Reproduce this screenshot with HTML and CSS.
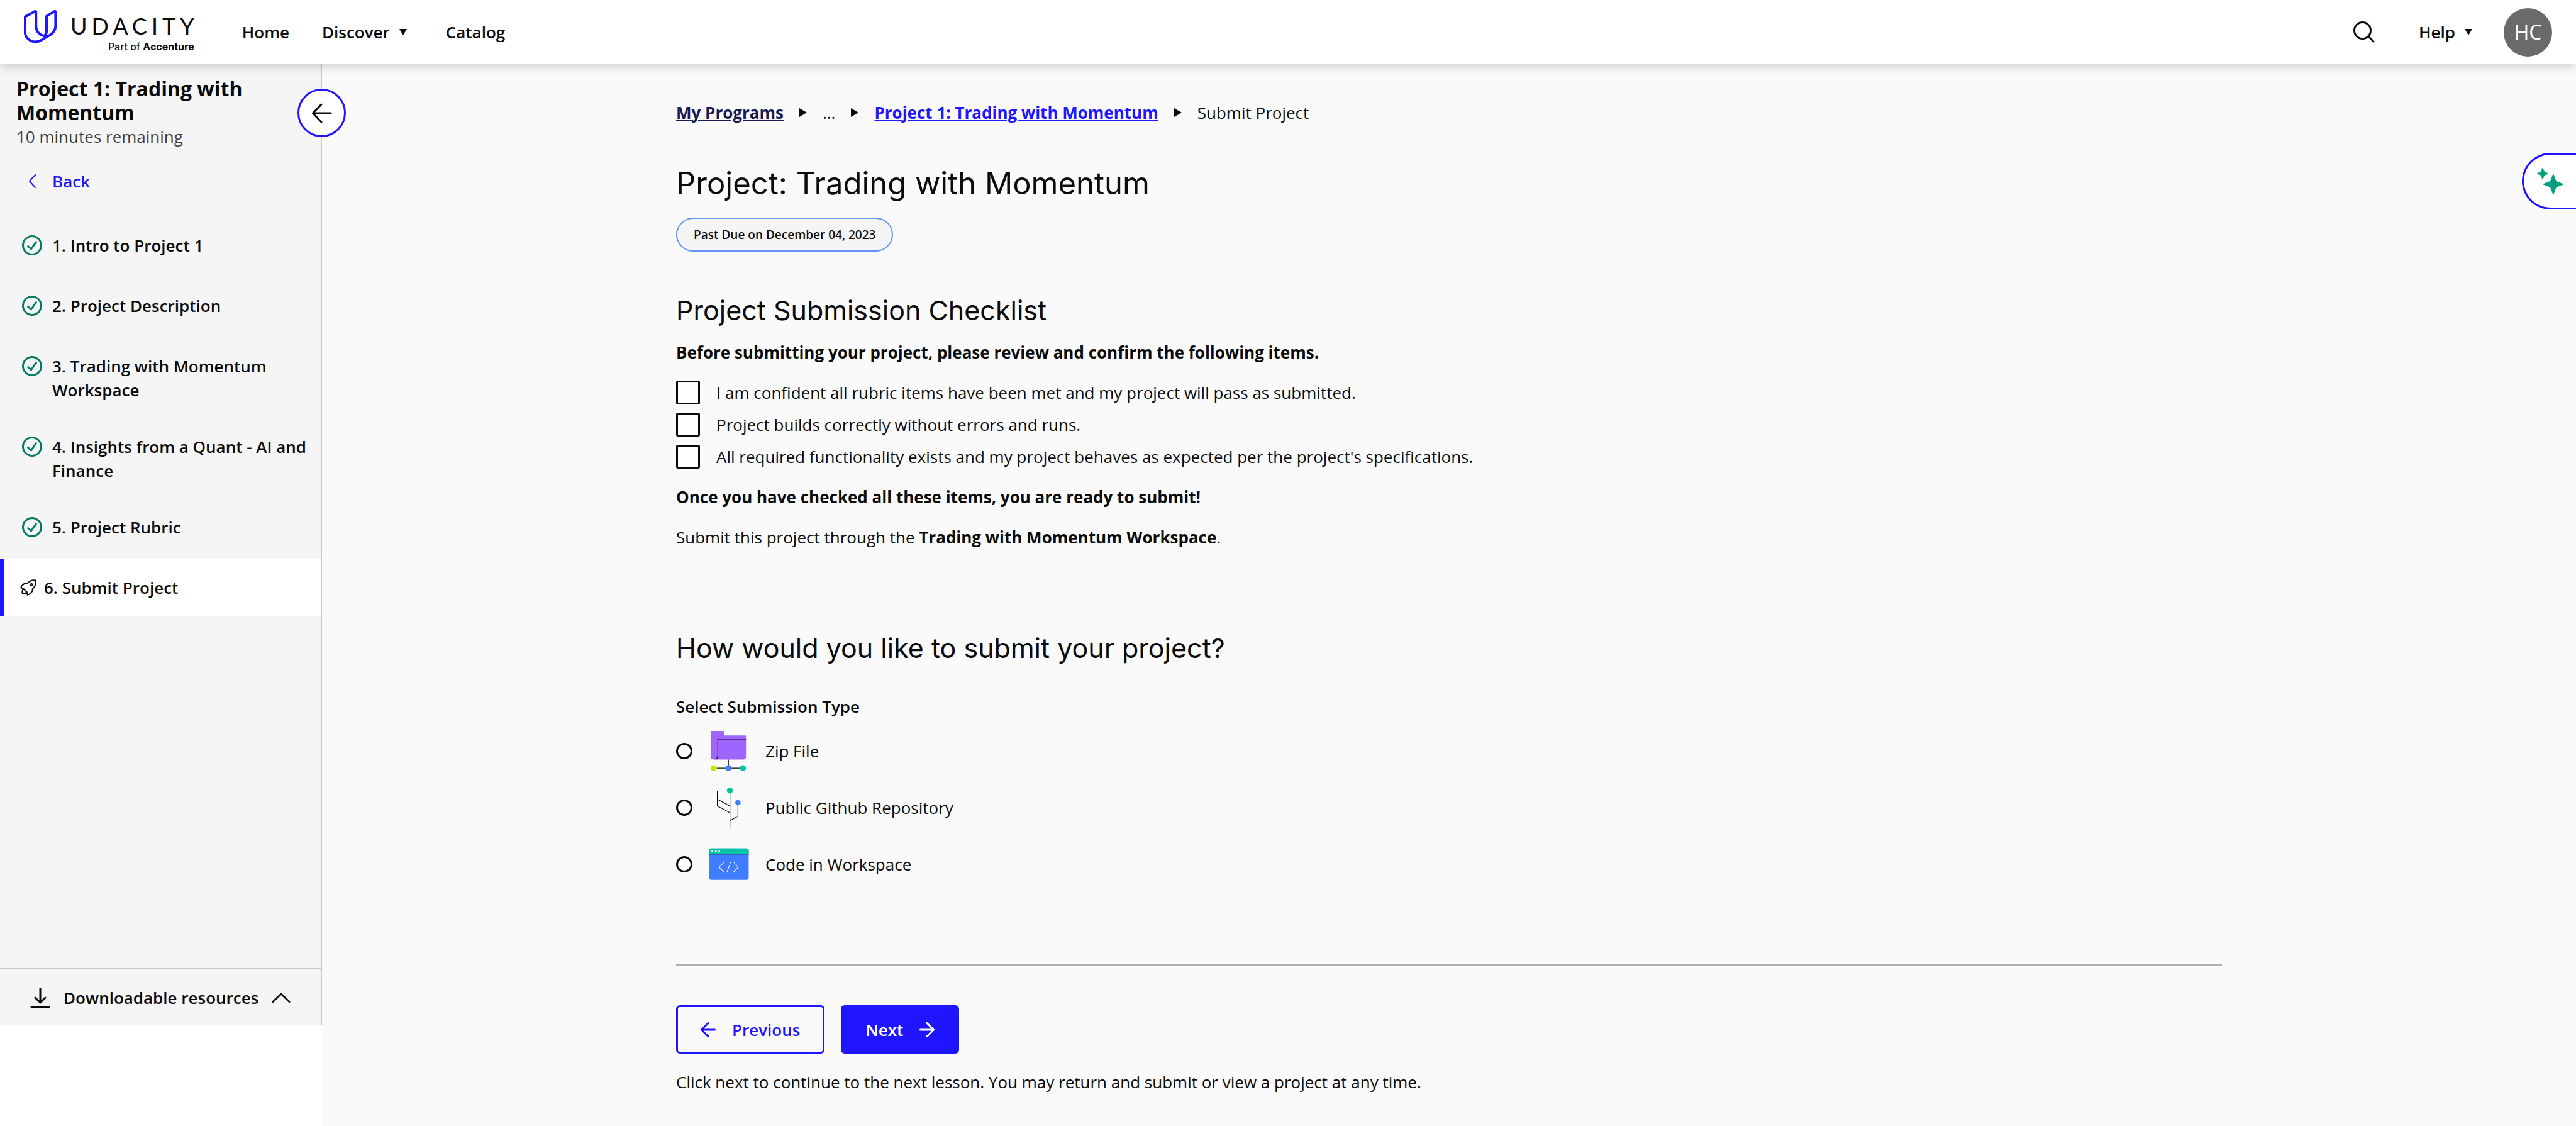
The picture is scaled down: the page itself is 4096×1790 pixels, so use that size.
FILE: index.html
```html
<!DOCTYPE html>
<html lang="en">
<head>
<meta charset="utf-8">
<meta name="viewport" content="width=device-width, initial-scale=1">
<title>Submit Project - Udacity</title>
<link rel="stylesheet" href="styles.css">
</head>
<body>
<header class="site-header">
  <a class="logo" href="#" aria-label="Udacity, part of Accenture">
    <svg class="logo-mark" viewBox="0 0 65 65" aria-hidden="true"><path d="M2 13.5 21 3q3-1.500 3 1v28c0 11 8 18 16.500 19.500M2 13.500v29C2 54 11 63 23 63c5 0 9-1.500 12-3.500L52 49.500C59 45 63 39 63 31V4q-.5-2.500-3-1L45 12v31c0 4-1 6-4.500 8.500"/></svg>
    <span class="logo-text">
      <span class="wordmark">UDACITY</span>
      <span class="tagline">Part of <b>Accenture</b></span>
    </span>
  </a>
  <nav class="main-nav" aria-label="Main">
    <a href="#">Home</a>
    <button type="button" class="nav-menu">Discover <svg class="caret" viewBox="0 0 12 10" aria-hidden="true"><path d="M0 0h12L6 10z"/></svg></button>
    <a href="#">Catalog</a>
  </nav>
  <div class="header-tools">
    <button type="button" class="search" aria-label="Search"><svg class="icon-search" viewBox="0 0 34 34" aria-hidden="true"><circle cx="14.500" cy="14.500" r="13"/><path d="m24 24 8 8"/></svg></button>
    <button type="button" class="nav-menu">Help <svg class="caret" viewBox="0 0 12 10" aria-hidden="true"><path d="M0 0h12L6 10z"/></svg></button>
    <button type="button" class="avatar">HC</button>
  </div>
</header>

<div class="page">
  <aside class="sidebar">
    <button type="button" class="collapse" aria-label="Collapse sidebar"><svg class="icon-collapse" viewBox="0 0 32 32" aria-hidden="true"><path d="M30 16H2M15 2 1.500 16 15 30"/></svg></button>
    <div class="lesson-head">
      <h2 class="lesson-title">Project 1: Trading with Momentum</h2>
      <p class="remaining">10 minutes remaining</p>
    </div>
    <a class="back" href="#"><svg class="icon-back" viewBox="0 0 12 22" aria-hidden="true"><path d="M11 1 2 11l9 10"/></svg>Back</a>
    <ol class="lessons">
      <li><a class="lesson" href="#"><svg class="icon-check" viewBox="0 0 32 32" aria-hidden="true"><circle cx="16" cy="16" r="14.500"/><path d="m9.500 17.500 5 4.500 8-11.500"/></svg><span>1. Intro to Project 1</span></a></li>
      <li><a class="lesson" href="#"><svg class="icon-check" viewBox="0 0 32 32" aria-hidden="true"><circle cx="16" cy="16" r="14.500"/><path d="m9.500 17.500 5 4.500 8-11.500"/></svg><span>2. Project Description</span></a></li>
      <li><a class="lesson" href="#"><svg class="icon-check" viewBox="0 0 32 32" aria-hidden="true"><circle cx="16" cy="16" r="14.500"/><path d="m9.500 17.500 5 4.500 8-11.500"/></svg><span>3. Trading with Momentum Workspace</span></a></li>
      <li><a class="lesson" href="#"><svg class="icon-check" viewBox="0 0 32 32" aria-hidden="true"><circle cx="16" cy="16" r="14.500"/><path d="m9.500 17.500 5 4.500 8-11.500"/></svg><span>4. Insights from a Quant - AI and Finance</span></a></li>
      <li><a class="lesson" href="#"><svg class="icon-check" viewBox="0 0 32 32" aria-hidden="true"><circle cx="16" cy="16" r="14.500"/><path d="m9.500 17.500 5 4.500 8-11.500"/></svg><span>5. Project Rubric</span></a></li>
      <li><a class="lesson current" href="#" aria-current="page"><svg class="icon-rocket" viewBox="0 0 26 26" aria-hidden="true"><path d="M24.500 1.500C19.500.8 15.500 2 11.500 6.200L8 6.500C5 7.500 2.500 10 1.200 13.200L6 15.500 10.500 20l1.200 4.800c3-.8 6-3.300 7.800-6.300l.3-3.500c4.700-4 5.700-8.500 4.700-13.500z"/><path d="M6 15.500c-2.500 1-3 3.500-2.500 6.500 3 .8 6 .2 7-2"/><circle cx="18" cy="8.500" r="1.500"/></svg><span>6. Submit Project</span></a></li>
    </ol>
    <button type="button" class="resources">
      <svg class="icon-download" viewBox="0 0 32 32" aria-hidden="true"><path d="M16 1v23M8 16l8 8 8-8M2 30.500h28"/></svg>
      Downloadable resources
      <svg class="icon-chevron" viewBox="0 0 30 16" aria-hidden="true"><path d="M2 14.500 15 2l13 12.500"/></svg>
    </button>
  </aside>

  <main class="main">
    <div class="content">
      <nav class="breadcrumbs" aria-label="Breadcrumb">
        <a class="crumb-root" href="#">My Programs</a>
        <svg class="crumb-arrow" viewBox="0 0 12 14" aria-hidden="true"><path d="M0 0v14l12-7z"/></svg>
        <span>...</span>
        <svg class="crumb-arrow" viewBox="0 0 12 14" aria-hidden="true"><path d="M0 0v14l12-7z"/></svg>
        <a class="crumb-link" href="#">Project 1: Trading with Momentum</a>
        <svg class="crumb-arrow" viewBox="0 0 12 14" aria-hidden="true"><path d="M0 0v14l12-7z"/></svg>
        <span>Submit Project</span>
      </nav>
      <h1 class="title">Project: Trading with Momentum</h1>
      <p class="due">Past Due on December 04, 2023</p>

      <section class="checklist">
        <h2 class="heading">Project Submission Checklist</h2>
        <p class="lead strong">Before submitting your project, please review and confirm the following items.</p>
        <div class="checks">
          <label class="check"><input type="checkbox"><span>I am confident all rubric items have been met and my project will pass as submitted.</span></label>
          <label class="check"><input type="checkbox"><span>Project builds correctly without errors and runs.</span></label>
          <label class="check"><input type="checkbox"><span>All required functionality exists and my project behaves as expected per the project's specifications.</span></label>
        </div>
        <p class="note strong">Once you have checked all these items, you are ready to submit!</p>
        <p class="note">Submit this project through the <b>Trading with Momentum Workspace</b>.</p>
      </section>

      <section class="submission">
        <h2 class="heading">How would you like to submit your project?</h2>
        <fieldset class="types">
          <legend>Select Submission Type</legend>
          <label class="type"><input type="radio" name="type">
            <svg class="type-icon" viewBox="0 0 80 80" aria-hidden="true"><path d="M4 1q0-1 1-1h25q1 0 1 1v8h42q1 0 1 1v42q0 5-6 5H10q-6 0-6-6z" fill="#a064ff"/><path d="M74 16H18v33c0 4-1 6-5 7M39 57v17M16 74h46" fill="none" stroke="#0b0b0b" stroke-width="1.500"/><circle cx="10" cy="74" r="6" fill="#bcea06"/><circle cx="39" cy="74" r="6" fill="#3f7cff"/><circle cx="68" cy="74" r="6" fill="#02c5a3"/></svg>
            <span>Zip File</span></label>
          <label class="type"><input type="radio" name="type">
            <svg class="type-icon" viewBox="0 0 80 80" aria-hidden="true"><path d="M42 12v68M17 7v29.500L42 50M17 23l25 14M58 34v23l-16 9" fill="none" stroke="#0b0b0b" stroke-width="1.500"/><circle cx="42" cy="6" r="6" fill="#02c5a3"/><circle cx="58" cy="30" r="5.300" fill="#3f7cff"/></svg>
            <span>Public Github Repository</span></label>
          <label class="type"><input type="radio" name="type">
            <svg class="type-icon" viewBox="0 0 80 80" aria-hidden="true"><rect x=".7" y="8.500" width="78.600" height="62.500" rx="4.500" fill="#3f7cff"/><path d="M.7 19v-6q0-4.500 4.500-4.500h69.600q4.500 0 4.500 4.500v6z" fill="#02c5a3"/><path d="M0 19.500h80" stroke="#0b0b0b" stroke-width="1.500"/><g fill="#fff"><circle cx="7" cy="14" r="1.700"/><circle cx="14" cy="14" r="1.700"/><circle cx="21" cy="14" r="1.700"/></g><path d="M31.500 35 20 45.500 31.500 56M48.500 35 59 45.500 48.500 56M43.500 35.500 36 56" fill="none" stroke="#fff" stroke-width="1.300"/></svg>
            <span>Code in Workspace</span></label>
        </fieldset>
      </section>

      <footer class="pager">
        <div class="pager-buttons">
          <button type="button" class="button outline"><svg class="icon-arrow" viewBox="0 0 24 24" aria-hidden="true"><path d="M22.500 12H2M12 1.500 1.500 12 12 22.500"/></svg>Previous</button>
          <button type="button" class="button solid">Next<svg class="icon-arrow" viewBox="0 0 24 24" aria-hidden="true"><path d="M1.500 12H22M12 1.500 22.500 12 12 22.500"/></svg></button>
        </div>
        <p class="note">Click next to continue to the next lesson. You may return and submit or view a project at any time.</p>
      </footer>
    </div>
  </main>
</div>

<button type="button" class="assistant" aria-label="Open assistant"><svg class="icon-sparkle" viewBox="0 0 52 52" aria-hidden="true"><path d="M11 0q1 0 1.500 2l1.500 4q.8 1.500 2 2l4 1.500q2 .5 2 1.500t-2 1.500l-4 1.500q-1.500.5-2 2l-1.500 4q-.5 2-1.500 2t-1.500-2L8 16q-.5-1.500-2-2l-4-1.500Q0 12 0 11t2-1.500L6 8q1.500-.5 2-2l1.500-4Q10 0 11 0zM32 12q1 0 1.500 2l3.500 9.500Q38 26 40.500 27L50 30.500q2 .5 2 1.500t-2 1.500L40.500 37Q38 38 37 40.500L33.500 50q-.5 2-1.500 2t-1.500-2L27 40.500Q26 38 23.500 37L14 33.500q-2-.5-2-1.500t2-1.500l9.500-3.500q2.500-1 3.500-3.500L30.500 14q.5-2 1.500-2z"/></svg></button>
</body>
</html>
```

FILE: styles.css
```css
* {
  box-sizing: border-box;
}

body {
  margin: 0;
  background: #fff;
  color: #0b0b0b;
  font: 400 26px/38px "Open Sans", sans-serif;
}

h1,
h2,
p,
ol,
fieldset {
  margin: 0;
  padding: 0;
}

button {
  margin: 0;
  padding: 0;
  border: 0;
  background: none;
  color: inherit;
  font: inherit;
  cursor: pointer;
}

a {
  color: inherit;
  text-decoration: none;
}

svg {
  display: block;
  flex: none;
  fill: none;
  stroke: currentColor;
  stroke-width: 3;
  stroke-linecap: round;
  stroke-linejoin: round;
}

.type-icon {
  width: 64px;
  height: 64px;
  stroke: none;
  stroke-linecap: butt;
  stroke-linejoin: miter;
}

/* Header */
.site-header {
  position: relative;
  z-index: 2;
  display: flex;
  align-items: center;
  height: 102px;
  padding: 0 38px;
  background: #fff;
  box-shadow: 0 3px 16px rgba(0, 0, 0, 0.2);
}

.logo {
  display: flex;
  align-items: flex-start;
  gap: 22px;
  height: 70px;
}

.logo-mark {
  width: 52px;
  height: 52px;
  color: #2015ff;
  stroke-width: 5;
}

.logo-text {
  display: flex;
  flex-direction: column;
  align-items: flex-end;
  padding-top: 7px;
}

.wordmark {
  margin-right: -7px;
  font: 400 36px/36px Lato, sans-serif;
  letter-spacing: 7px;
}

.tagline {
  font: 500 16px/30px Inter, sans-serif;
}

.main-nav,
.header-tools {
  display: flex;
  align-items: center;
  font-weight: 600;
}

.main-nav {
  gap: 52px;
  margin-left: 76px;
}

.nav-menu {
  display: flex;
  align-items: center;
  gap: 15px;
}

.main-nav .nav-menu {
  margin-right: 10px;
}

.caret {
  width: 12px;
  height: 10px;
  fill: currentColor;
  stroke: none;
}

.header-tools {
  gap: 50px;
  margin-left: auto;
}

.search {
  margin-right: 20px;
}

.icon-search {
  width: 34px;
  height: 34px;
}

.avatar {
  width: 77px;
  height: 77px;
  border-radius: 50%;
  background: #6a6a6a;
  color: #fff;
  font-size: 32px;
  font-weight: 500;
}

/* Sidebar */
.page {
  display: grid;
  grid-template-columns: 512px 1fr;
  min-height: calc(100vh - 102px);
}

.sidebar {
  position: relative;
  display: flex;
  flex-direction: column;
  height: calc(100vh - 262px);
  border-right: 2px solid #c7c7c7;
  background: #f5f5f5;
}

.collapse {
  position: absolute;
  top: 39px;
  right: -40px;
  display: grid;
  place-items: center;
  width: 77px;
  height: 77px;
  border: 3px solid #2015ff;
  border-radius: 50%;
  background: #fff;
}

.icon-collapse {
  width: 32px;
  height: 32px;
}

.lesson-head {
  padding: 20px 90px 0 26px;
}

.lesson-title {
  font-size: 32px;
  font-weight: 700;
  line-height: 38px;
}

.remaining {
  color: #3d3d3d;
}

.back {
  display: flex;
  align-items: center;
  gap: 26px;
  margin: 33px 0 38px 45px;
  color: #2015ff;
  font-weight: 600;
}

.icon-back {
  width: 12px;
  height: 22px;
  stroke-width: 2;
}

.lessons {
  display: flex;
  flex-direction: column;
  gap: 6px;
  list-style: none;
}

.lesson {
  display: flex;
  align-items: flex-start;
  gap: 16px;
  min-height: 90px;
  padding: 26px 12px 20px 35px;
  font-weight: 600;
}

.lesson.current {
  gap: 12px;
  padding-left: 26px;
  border-left: 6px solid #2015ff;
  background: #fff;
}

.icon-check {
  width: 32px;
  height: 32px;
  margin-top: 3px;
  color: #037a66;
}

.icon-rocket {
  width: 26px;
  height: 26px;
  margin-top: 6px;
  stroke-width: 2;
}

.resources {
  display: flex;
  align-items: center;
  gap: 21px;
  height: 91px;
  margin-top: auto;
  padding-left: 48px;
  border-top: 2px solid #c7c7c7;
  font-weight: 600;
}

.icon-download {
  width: 32px;
  height: 32px;
}

.icon-chevron {
  width: 30px;
  height: 16px;
}

/* Main column */
.main {
  padding: 58px 64px 40px;
  background: #fafafa;
}

.content {
  max-width: 2458px;
  margin: 0 auto;
}

.breadcrumbs {
  display: flex;
  align-items: center;
  gap: 25px;
  height: 38px;
}

.breadcrumbs a {
  font-weight: 700;
  text-decoration: underline;
  text-decoration-thickness: 2px;
}

.crumb-root {
  color: #171a53;
}

.crumb-link {
  color: #2015ff;
}

.crumb-arrow {
  width: 12px;
  height: 14px;
  fill: currentColor;
  stroke: none;
}

.title {
  margin-top: 62px;
  font: 400 49px/64px Inter, sans-serif;
}

.due {
  width: fit-content;
  margin-top: 22px;
  padding: 0 26px;
  border: 2px solid #6491fa;
  border-radius: 27px;
  background: #f5f5f5;
  font-size: 19px;
  font-weight: 600;
  line-height: 50px;
}

.heading {
  font: 400 43px/56px Inter, sans-serif;
}

.checklist {
  margin-top: 65px;
}

.lead {
  margin-top: 20px;
}

.note {
  margin-top: 26px;
}

.strong,
.checklist b {
  font-weight: 700;
}

.checks {
  display: grid;
  gap: 13px;
  margin-top: 26px;
}

.check {
  display: flex;
  align-items: center;
  gap: 26px;
}

.check input,
.type input {
  flex: none;
  appearance: none;
  margin: 0;
  border: 3px solid #0b0b0b;
  background: #fff;
}

.check input {
  width: 38px;
  height: 38px;
  border-radius: 3px;
}

.submission {
  margin-top: 129px;
}

.types {
  display: grid;
  gap: 26px;
  min-width: 0;
  margin-top: 46px;
  border: 0;
}

.types legend {
  padding: 0;
  margin-bottom: 20px;
  font-weight: 600;
}

.type {
  display: flex;
  align-items: center;
  gap: 26px;
}

.type input {
  width: 26px;
  height: 26px;
  border-radius: 50%;
}

.pager {
  margin-top: 127px;
  padding-top: 63px;
  border-top: 2px solid #b0b0b0;
}

.pager-buttons {
  display: flex;
  gap: 26px;
}

.button {
  display: flex;
  align-items: center;
  gap: 26px;
  height: 77px;
  padding: 0 36px;
  border: 3px solid #2015ff;
  border-radius: 6px;
  font-weight: 600;
}

.outline {
  color: #2015ff;
}

.solid {
  background: #2015ff;
  color: #fff;
}

.icon-arrow {
  width: 24px;
  height: 24px;
}

.assistant {
  position: fixed;
  top: 243px;
  right: 0;
  display: flex;
  align-items: center;
  width: 86px;
  height: 90px;
  padding-left: 21px;
  border: 3px solid #2015ff;
  border-right: 0;
  border-radius: 45px 0 0 45px;
  background: #fff;
}

.icon-sparkle {
  width: 42px;
  height: 42px;
  fill: #02a081;
  stroke: none;
}
```
